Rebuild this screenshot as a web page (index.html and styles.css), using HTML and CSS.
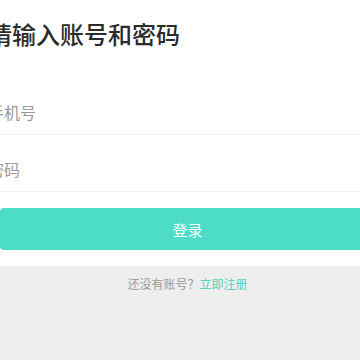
FILE: index.html
```html
<!DOCTYPE html>
<html lang="zh-CN">
<head>
<meta charset="utf-8">
<title>登录</title>
<link rel="stylesheet" href="styles.css">
</head>
<body>
<div class="page">
  <section class="card">
    <h1 class="title">请输入账号和密码</h1>
    <div class="field"><input class="input" type="tel" placeholder="手机号"></div>
    <div class="field"><input class="input" type="password" placeholder="密码"></div>
    <button class="submit" type="button">登录</button>
  </section>
  <p class="signup">还没有账号？<a class="signup-link" href="#">立即注册</a></p>
</div>
</body>
</html>
```

FILE: styles.css
```css
html, body {
  margin: 0;
  padding: 0;
  background: #eeeeee;
  overflow: hidden;
}

body {
  font-family: "Noto Sans CJK SC", "Noto Sans", sans-serif;
  width: 360px;
  height: 360px;
}

.page {
  width: 375px;
  display: flex;
  flex-direction: column;
}

.card {
  background: #ffffff;
  display: flex;
  flex-direction: column;
  padding: 22px 0 16px;
}

.title {
  margin: 0 0 0 -12px;
  font-size: 24px;
  line-height: 24px;
  font-weight: 500;
  color: #2b2b2b;
  letter-spacing: 0;
}

.field {
  height: 50px;
  display: flex;
  align-items: flex-end;
  border-bottom: 1px solid #f1f1f1;
}

.field:first-of-type {
  margin-top: 38px;
}

.field + .field {
  margin-top: 6px;
}

.input {
  border: 0;
  outline: none;
  padding: 0;
  margin: 0 0 10px -12px;
  height: 24px;
  width: 300px;
  font-family: inherit;
  font-size: 16px;
  color: #333333;
  background: transparent;
}

.input::placeholder {
  color: #9a9a9a;
}

.submit {
  margin-top: 16px;
  height: 42px;
  border: 0;
  border-radius: 4px;
  background: #4ddcc8;
  color: #ffffff;
  font-family: inherit;
  font-size: 15px;
  padding: 0;
}

.signup {
  margin: 10px 0 0;
  text-align: center;
  font-size: 12px;
  line-height: 16px;
  color: #999999;
}

.signup-link {
  color: #4fd3bf;
  text-decoration: none;
}
```
